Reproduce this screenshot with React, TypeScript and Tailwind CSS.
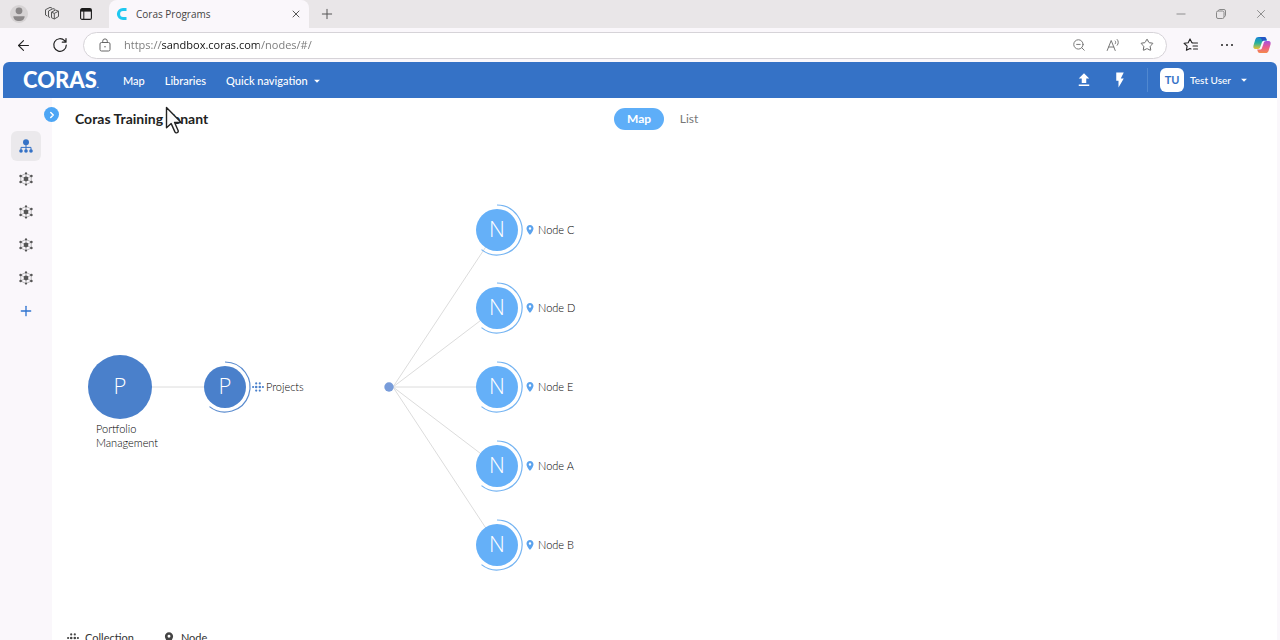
import { useState, type ReactNode } from "react"
import { MdArrowDropDown, MdFlashOn, MdPlace, MdUpload } from "react-icons/md"
import { ArrowLeft, ChevronRight, Minus, Plus, Star, X, ZoomOut } from "lucide-react"

type NodeKind = "collection" | "node"

interface MapNode {
    id: string
    label: string
    kind: NodeKind
    x: number
    y: number
}

// Coordinates are centres on the map canvas
const ROOT = { x: 68, y: 247 }
const HUB = { x: 337, y: 247 }

const COLLECTION: MapNode = { id: "projects", label: "Projects", kind: "collection", x: 173, y: 247 }

const NODES: MapNode[] = [
    { id: "c", label: "Node C", kind: "node", x: 445, y: 90 },
    { id: "d", label: "Node D", kind: "node", x: 445, y: 168 },
    { id: "e", label: "Node E", kind: "node", x: 445, y: 247 },
    { id: "a", label: "Node A", kind: "node", x: 445, y: 326 },
    { id: "b", label: "Node B", kind: "node", x: 445, y: 405 },
]

const CollectionIcon = ({ className }: { className?: string }) => (
    <svg viewBox="0 0 12 10" className={className} fill="currentColor" aria-hidden="true">
        <circle cx="4.2" cy="1.4" r="1.1" />
        <circle cx="7.8" cy="1.4" r="1.1" />
        <circle cx="1.1" cy="5" r="1.1" />
        <circle cx="4.2" cy="5" r="1.3" />
        <circle cx="7.8" cy="5" r="1.3" />
        <circle cx="10.9" cy="5" r="1.1" />
        <circle cx="4.2" cy="8.6" r="1.1" />
        <circle cx="7.8" cy="8.6" r="1.1" />
    </svg>
)

const HierarchyIcon = () => (
    <svg viewBox="0 0 14 14" className="size-3.5" fill="#3572c6" aria-hidden="true">
        <circle cx="7" cy="3.2" r="3" />
        <path d="M7 5v6M2 11V8.4h10V11" fill="none" stroke="#3572c6" strokeWidth="1" />
        <circle cx="2" cy="12" r="1.8" />
        <circle cx="7" cy="12" r="1.8" />
        <circle cx="12" cy="12" r="1.8" />
    </svg>
)

const NetworkIcon = () => (
    <svg viewBox="0 0 14 14" className="size-3.5" aria-hidden="true">
        <path
            d="M7 1.4 12.2 4v6L7 12.6 1.8 10V4zM7 1.4v11.2M1.8 4l10.4 6M12.2 4 1.8 10"
            fill="none"
            stroke="#888"
            strokeWidth="0.6"
        />
        <g fill="#555">
            <circle cx="7" cy="1.4" r="1.1" />
            <circle cx="12.4" cy="4" r="1.3" />
            <circle cx="12.4" cy="10" r="1.3" />
            <circle cx="7" cy="12.6" r="1.1" />
            <circle cx="1.6" cy="10" r="1.3" />
            <circle cx="1.6" cy="4" r="1.3" />
            <circle cx="7" cy="7" r="2.4" />
        </g>
    </svg>
)

const ProfileIcon = () => (
    <svg viewBox="0 0 18 18" className="size-[18px]" aria-hidden="true">
        <circle cx="9" cy="9" r="9" fill="#d6d3d4" />
        <circle cx="9" cy="5.8" r="3.4" fill="#8a8788" />
        <path d="M3.4 11.2h11.2c0 3.2-2.6 4.9-5.6 4.9s-5.6-1.7-5.6-4.9z" fill="#8a8788" />
    </svg>
)

const WorkspacesIcon = () => (
    <svg viewBox="0 0 16 16" className="size-4" fill="none" stroke="#555" strokeWidth="1" strokeLinejoin="round" aria-hidden="true">
        <path d="M7.5 6.2 11.5 4l3 1.2v5.3L10.3 13l-2.8-1.3z" />
        <path d="m7.5 6.2 2.8 1.2 4.2-2.2M10.3 7.4V13" />
        <path d="m6 11.5-1.5-.7V5L9 2.6l2 .7M3.3 10 1.5 9V3.7L6 1.4l2 .7" />
    </svg>
)

const TabPanelIcon = () => (
    <svg viewBox="0 0 12 12" className="size-3" fill="none" stroke="#1b1b1b" aria-hidden="true">
        <rect x="0.6" y="0.6" width="10.8" height="10.8" rx="1.5" strokeWidth="1.1" />
        <path d="M1 2.3h10" strokeWidth="2.6" />
        <path d="M3.8 3v8" strokeWidth="1" />
    </svg>
)

const CorasFavicon = () => (
    <svg viewBox="0 0 12 14" className="h-3.5 w-3" aria-hidden="true">
        <path d="M10.5 2.5H7A4.5 4.500 0 0 0 7 11.500h3.500" fill="none" stroke="#1fc8f0" strokeWidth="3.2" />
    </svg>
)

const ReloadIcon = () => (
    <svg viewBox="0 0 16 16" className="size-4" fill="none" stroke="#222" strokeWidth="1.2" strokeLinecap="round" strokeLinejoin="round" aria-hidden="true">
        <path d="M14.3 8A6.3 6.3 0 1 1 12.6 3.7L14 5.2M14 1.5v3.7h-3.7" />
    </svg>
)

const LockIcon = () => (
    <svg viewBox="0 0 12 14" className="h-3.5 w-3" fill="none" stroke="#666" strokeWidth="1" aria-hidden="true">
        <rect x="1" y="4.5" width="10" height="8.5" rx="1.5" />
        <path d="M3.7 4.5V3.2a2.3 2.3 0 0 1 4.6 0v1.3" />
        <circle cx="6" cy="8.8" r="0.7" fill="#555" stroke="none" />
    </svg>
)

const ReadAloudIcon = () => (
    <svg viewBox="0 0 14 14" className="size-3.5" fill="none" stroke="#777" strokeWidth="1" strokeLinecap="round" strokeLinejoin="round" aria-hidden="true">
        <path d="m1.2 12.5 4-10 4 10M2.6 9h5.2M9.2 3c.7.7.7 2 0 2.8M11.2 1.5c1.5 1.6 1.5 4.2 0 5.8" />
    </svg>
)

const FavoritesIcon = () => (
    <svg viewBox="0 0 16 16" className="size-4" fill="none" stroke="#222" strokeWidth="1.1" strokeLinecap="round" strokeLinejoin="round" aria-hidden="true">
        <path d="M9.6 5.7H8.9L7 1.9 5.2 5.7l-4.1.6 3 2.9-.7 4.1L7 11.5l1 .5M9.5 6h5M10 9h4.5M10.5 12h4" />
    </svg>
)

const RestoreIcon = () => (
    <svg viewBox="0 0 10 10" className="size-2.5" fill="none" stroke="#888" strokeWidth="1" aria-hidden="true">
        <rect x="0.5" y="2" width="7.5" height="7.5" rx="1.5" />
        <path d="M2.5 2V1.5C2.5 1 3 .5 3.5.5H8A1.5 1.5 0 0 1 9.5 2v4.5c0 .6-.4 1-1 1H8" />
    </svg>
)

const CopilotIcon = () => (
    <svg viewBox="0 0 18 18" className="size-[18px]" aria-hidden="true">
        <defs>
            <linearGradient id="copilot-left" x1="0" y1="0" x2="0" y2="1">
                <stop offset="0" stopColor="#1683d8" />
                <stop offset="0.5" stopColor="#27b39b" />
                <stop offset="1" stopColor="#f0c12e" />
            </linearGradient>
            <linearGradient id="copilot-right" x1="0" y1="0" x2="0" y2="1">
                <stop offset="0" stopColor="#a453df" />
                <stop offset="0.5" stopColor="#ea5a8f" />
                <stop offset="1" stopColor="#f58a4b" />
            </linearGradient>
        </defs>
        <path d="M5.5 1h5.7c1.3 0 1.8.8 2.2 2l.4 1.5H11c-1 0-1.6.5-2 1.6l-1.7 5C6.9 12.3 6.2 13 5 13H2.5C.6 13 0 11.6.5 9.6l1.800-6C2.900 1.800 3.900 1 5.500 1z" fill="url(#copilot-left)" />
        <path d="M12.5 17H6.8c-1.3 0-1.8-.8-2.2-2l-.4-1.5H7c1 0 1.6-.5 2-1.6l1.7-5C11.1 5.7 11.8 5 13 5h2.500c1.900 0 2.500 1.400 2 3.400l-1.800 6c-.6 1.800-1.600 2.600-3.200 2.600z" fill="url(#copilot-right)" />
        <path d="M5.5 1h5.7c1.3 0 1.8.8 2.2 2l.4 1.5H11c-.8 0-1.3.3-1.7 1C8.8 3.5 8.4 1.8 5.5 1z" fill="#2456c4" />
    </svg>
)

const PointerIcon = () => (
    <svg viewBox="0 0 18 28" className="h-7 w-[18px]" aria-hidden="true">
        <path
            d="M1.5 1.5v20.3l4.7-4.2 3.7 8.3c.5 1 1.3 1.2 2.3.8 1-.5 1.3-1.2.9-2.2l-3.5-8h6.6z"
            fill="#fafafa"
            stroke="#222"
            strokeWidth="1.4"
            strokeLinejoin="round"
        />
    </svg>
)

const IconButton = ({ label, className = "", children }: { label: string; className?: string; children: ReactNode }) => (
    <button type="button" aria-label={label} className={`flex shrink-0 items-center justify-center ${className}`}>
        {children}
    </button>
)

const TabStrip = () => (
    <div className="flex h-7 shrink-0 items-stretch bg-[#e9e6e8] font-['Open_Sans',sans-serif]">
        <div className="flex w-[109px] items-center gap-4 pl-2.5">
            <IconButton label="Profile"><ProfileIcon /></IconButton>
            <IconButton label="Workspaces"><WorkspacesIcon /></IconButton>
            <IconButton label="Tab actions" className="ml-1"><TabPanelIcon /></IconButton>
        </div>
        <div className="flex w-[200px] items-center rounded-t-lg bg-[#faf7fb] px-[7px]">
            <CorasFavicon />
            <span className="ml-2 flex-1 text-[10px] text-[#444]">Coras Programs</span>
            <IconButton label="Close tab"><X className="size-3 text-[#444]" strokeWidth={1.8} /></IconButton>
        </div>
        <IconButton label="New tab" className="ml-2.5"><Plus className="size-4 text-[#555]" strokeWidth={1.5} /></IconButton>
        <div className="ml-auto flex items-center gap-7 pr-3">
            <IconButton label="Minimize"><Minus className="size-3.5 text-[#888]" strokeWidth={1.6} /></IconButton>
            <IconButton label="Restore"><RestoreIcon /></IconButton>
            <IconButton label="Close window"><X className="size-3.5 text-[#888]" strokeWidth={1.6} /></IconButton>
        </div>
    </div>
)

const AddressBar = () => (
    <div className="flex h-[34px] shrink-0 items-center bg-[#faf7fb] pr-[9px] pl-[15px] font-['Open_Sans',sans-serif]">
        <IconButton label="Back"><ArrowLeft className="size-[17px] text-[#222]" strokeWidth={1.5} /></IconButton>
        <IconButton label="Reload" className="ml-5"><ReloadIcon /></IconButton>
        <div className="ml-[15px] flex h-[27px] flex-1 items-center rounded-full border border-[#d6d3d8] bg-white pr-3 pl-[15px]">
            <LockIcon />
            <input
                type="text"
                aria-label="Address"
                defaultValue="https://sandbox.coras.com/nodes/#/"
                className="ml-[13px] flex-1 bg-[linear-gradient(to_right,#777_37px,#111_37px,#111_135px,#777_135px)] bg-clip-text text-[11px] text-transparent outline-none"
            />
            <div className="flex items-center gap-5">
                <IconButton label="Zoom out"><ZoomOut className="size-3.5 text-[#777]" strokeWidth={1.7} /></IconButton>
                <IconButton label="Read aloud"><ReadAloudIcon /></IconButton>
                <IconButton label="Add to favorites"><Star className="size-3.5 text-[#666]" strokeWidth={1.7} /></IconButton>
            </div>
        </div>
        <IconButton label="Favorites" className="ml-4"><FavoritesIcon /></IconButton>
        <IconButton label="More" className="ml-5 w-4 gap-[3px]">
            <span className="size-0.5 rounded-full bg-[#222]" />
            <span className="size-0.5 rounded-full bg-[#222]" />
            <span className="size-0.5 rounded-full bg-[#222]" />
        </IconButton>
        <IconButton label="Copilot" className="ml-[18px]"><CopilotIcon /></IconButton>
    </div>
)

const AppHeader = () => (
    <header className="flex h-9 shrink-0 items-center rounded-t-md bg-[#3572c6] pr-[26px] pl-5 text-[11px] font-medium text-white">
        <a href="#/" className="flex w-[100px] items-end text-[22px] leading-none font-black">
            CORAS<span className="text-[8px] leading-3">.</span>
        </a>
        <nav className="flex items-center gap-5 pt-0.5">
            <a href="#/map">Map</a>
            <a href="#/libraries">Libraries</a>
            <button type="button" className="flex items-center gap-0.5">
                Quick navigation
                <MdArrowDropDown className="size-3.5" />
            </button>
        </nav>
        <div className="ml-auto flex items-center">
            <IconButton label="Upload"><MdUpload className="size-[18px]" /></IconButton>
            <IconButton label="Quick actions" className="ml-[18px]"><MdFlashOn className="size-[18px]" /></IconButton>
            <span className="ml-[18px] h-6 w-px bg-[#5088d0]" />
            <button type="button" className="ml-3 flex items-center">
                <span className="flex size-6 items-center justify-center rounded-md bg-white font-bold text-[#3572c6]">TU</span>
                <span className="ml-1.5 text-[10px]">Test User</span>
                <MdArrowDropDown className="ml-1.5 size-3.5" />
            </button>
        </div>
    </header>
)

const Sidebar = () => (
    <aside className="relative flex w-[49px] shrink-0 flex-col items-center bg-[#faf7fb] pt-[33px] pr-1">
        <button
            type="button"
            aria-label="Expand sidebar"
            className="absolute top-[9px] -right-[7px] flex size-[15px] items-center justify-center rounded-full bg-[#4da6f5] text-white"
        >
            <ChevronRight className="size-2.5" strokeWidth={3.5} />
        </button>
        <IconButton label="Hierarchy" className="mb-px size-[30px] rounded-md bg-[#ebe9ec]"><HierarchyIcon /></IconButton>
        {["Network 1", "Network 2", "Network 3", "Network 4"].map((label) => (
            <IconButton key={label} label={label} className="h-[33px] w-[30px]"><NetworkIcon /></IconButton>
        ))}
        <IconButton label="Add" className="h-[33px] w-[30px]"><Plus className="size-4 text-[#2f74d0]" strokeWidth={2} /></IconButton>
    </aside>
)

const MapNodeView = ({ node }: { node: MapNode }) => {
    const isCollection = node.kind === "collection"

    return (
        <div className="absolute flex h-[42px] -translate-y-1/2 items-center" style={{ left: node.x - 21, top: node.y }}>
            <button
                type="button"
                aria-label={`Open ${node.label}`}
                className={`flex size-[42px] items-center justify-center rounded-full pb-[3px] font-['Open_Sans',sans-serif] text-[22px] font-light text-white ${isCollection ? "bg-[#4a80cb]" : "bg-[#65b0f8]"}`}
            >
                {isCollection ? "P" : "N"}
            </button>
            {isCollection ? (
                <CollectionIcon className="ml-1.5 h-2.5 w-3 text-[#4a80cb]" />
            ) : (
                <MdPlace className="ml-1.5 size-3 text-[#5ba3ee]" />
            )}
            <span className="ml-0.5 text-[11px] font-light whitespace-nowrap text-black">{node.label}</span>
        </div>
    )
}

const MapCanvas = () => (
    <div className="relative h-[490px] shrink-0">
        <svg className="absolute inset-0 size-full" fill="none" aria-hidden="true">
            <path d={`M${ROOT.x} ${ROOT.y}H${COLLECTION.x}`} stroke="#dcdcdc" />
            {NODES.map((node) => (
                <path key={node.id} d={`M${HUB.x + 4} ${HUB.y}L${node.x} ${node.y}`} stroke="#dcdcdc" />
            ))}
            {[COLLECTION, ...NODES].map((node) => (
                <path
                    key={node.id}
                    d={`M${node.x} ${node.y - 25}a25 25 0 1 1-15.5 44.6`}
                    stroke={node.kind === "collection" ? "#5b8ccf" : "#75b4f2"}
                    strokeWidth="1.2"
                />
            ))}
            <circle cx={HUB.x} cy={HUB.y} r="4.7" fill="#789cda" />
        </svg>
        <div className="absolute -translate-x-1/2" style={{ left: ROOT.x, top: ROOT.y - 32 }}>
            <button
                type="button"
                aria-label="Open Portfolio Management"
                className="flex size-16 items-center justify-center rounded-full bg-[#4a80cb] pb-[3px] font-['Open_Sans',sans-serif] text-[22px] font-light text-white"
            >
                P
            </button>
            <p className="ml-2 w-14 pt-[3px] text-[11px] leading-[14px] font-light text-black">Portfolio Management</p>
        </div>
        {[COLLECTION, ...NODES].map((node) => (
            <MapNodeView key={node.id} node={node} />
        ))}
    </div>
)

const Legend = () => (
    <div className="flex shrink-0 items-center gap-7 pl-3.5 text-[11px] text-[#333]">
        <span className="flex items-center gap-[5px]">
            <CollectionIcon className="h-2.5 w-[14px] text-[#444]" />
            Collection
        </span>
        <span className="flex items-center gap-[5px]">
            <MdPlace className="size-3.5 text-[#444]" />
            Node
        </span>
    </div>
)

const App = () => {
    const [view, setView] = useState<"map" | "list">("map")
    const active = "bg-[#5eaef8] font-bold text-white"
    const inactive = "text-[#777]"

    return (
        <div className="flex h-screen flex-col overflow-hidden bg-[#faf7fb] font-[Lato,sans-serif]">
            <TabStrip />
            <AddressBar />
            <div className="flex min-h-0 flex-1 flex-col px-[3px]">
                <AppHeader />
                <div className="flex min-h-0 flex-1">
                    <Sidebar />
                    <main className="flex min-w-0 flex-1 flex-col overflow-hidden bg-white">
                        <div className="grid h-[42px] shrink-0 grid-cols-[1fr_auto_1fr] items-center pl-[23px]">
                            <h1 className="relative justify-self-start pb-0.5 text-[14px] font-bold text-[#222]">
                                Coras Training Tenant
                                <span className="absolute -top-0.5 left-[90px]"><PointerIcon /></span>
                            </h1>
                            <div className="flex pr-6 text-[12px]">
                                <button
                                    type="button"
                                    aria-pressed={view === "map"}
                                    onClick={() => setView("map")}
                                    className={`h-[22px] w-[50px] rounded-full ${view === "map" ? active : inactive}`}
                                >
                                    Map
                                </button>
                                <button
                                    type="button"
                                    aria-pressed={view === "list"}
                                    onClick={() => setView("list")}
                                    className={`h-[22px] w-[50px] rounded-full ${view === "list" ? active : inactive}`}
                                >
                                    List
                                </button>
                            </div>
                        </div>
                        <MapCanvas />
                        <Legend />
                    </main>
                </div>
            </div>
        </div>
    )
}

export default App
